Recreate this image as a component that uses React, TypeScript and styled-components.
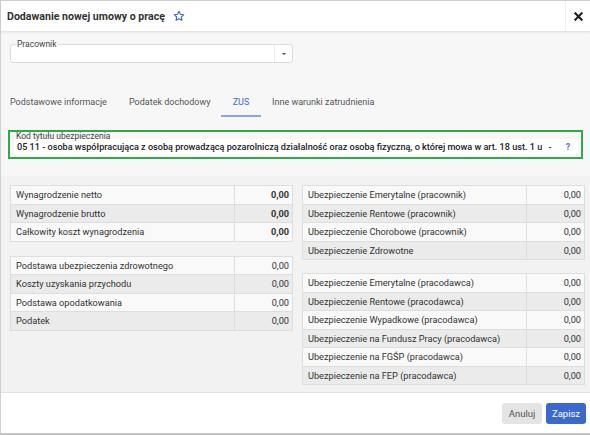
import styled, { createGlobalStyle } from 'styled-components';

const GlobalStyle = createGlobalStyle`
  html, body {
    margin: 0;
    padding: 0;
    background: #ffffff;
  }
  body {
    font-family: Roboto, "Liberation Sans", sans-serif;
    color: #333;
  }
`;

const Dialog = styled.div`
  width: 590px;
  height: 435px;
  box-sizing: border-box;
  border-top: 1px solid #d0d0d0;
  border-left: 1px solid #d0d0d0;
  border-bottom: 2px solid #c4c4c4;
  display: flex;
  flex-direction: column;
  background: #fff;
`;

const Header = styled.header`
  height: 30px;
  display: flex;
  align-items: stretch;
  background: #fff;
  border-bottom: 1px solid #e4e4e4;
  box-shadow: 0 1px 2px rgba(0, 0, 0, 0.06);
  position: relative;
  z-index: 1;
`;

const Title = styled.h1`
  flex: 1;
  margin: 0;
  padding-left: 6px;
  display: flex;
  align-items: center;
  gap: 8px;
  font-size: 10.6px;
  font-weight: bold;
  color: #333;
`;

const CloseButton = styled.div`
  width: 24px;
  border-left: 1px solid #f0f0f0;
  display: flex;
  align-items: center;
  justify-content: center;
`;

const Body = styled.div`
  flex: 1;
  display: flex;
  flex-direction: column;
  background: #f7f7f7;
`;

const Top = styled.div`
  padding: 12px 6px 0 9px;
`;

const Field = styled.div`
  position: relative;
  width: 283px;
  height: 19px;
  box-sizing: border-box;
  border: 1px solid #dcdcdc;
  border-radius: 3px;
  background: #fff;
  display: flex;
  justify-content: flex-end;
`;

const FloatLabel = styled.span`
  position: absolute;
  left: 5px;
  top: -6px;
  font-size: 8.5px;
  line-height: 10px;
  color: #444;
  background: linear-gradient(#f7f7f7 50%, #fff 50%);
  padding: 0 1px;
`;

const Caret = styled.div`
  width: 17px;
  border-left: 1px solid #ececec;
  display: flex;
  align-items: center;
  justify-content: center;
  &::after {
    content: '';
    border-left: 2.5px solid transparent;
    border-right: 2.5px solid transparent;
    border-top: 2.5px solid #444;
  }
`;

const Tabs = styled.nav`
  display: flex;
  margin-top: 26px;
  height: 28px;
`;

const Tab = styled.div<{ $active?: boolean; $w: number }>`
  width: ${(p) => p.$w}px;
  flex: none;
  box-sizing: border-box;
  font-size: 9px;
  color: ${(p) => (p.$active ? '#3f6cc6' : '#555')};
  text-align: ${(p) => (p.$active ? 'center' : 'left')};
  padding-top: 8px;
  border-bottom: 2px solid ${(p) => (p.$active ? '#8aa6dc' : 'transparent')};
`;

const Spacer = styled.div<{ $w: number }>`
  width: ${(p) => p.$w}px;
  flex: none;
`;

const InsuranceBox = styled.div`
  margin: 13px 1px 0 -2px;
  height: 29px;
  box-sizing: border-box;
  border: 2px solid #2faa48;
  padding: 0 3px 2px 4px;
  display: flex;
  flex-direction: column;
  justify-content: flex-end;
  position: relative;
`;

const SmallLabel = styled.span`
  position: absolute;
  left: 6px;
  top: 0px;
  font-size: 8.5px;
  line-height: 9px;
  color: #444;
`;

const InsuranceInput = styled.div`
  height: 16px;
  background: #fff;
  border-radius: 2px;
  display: flex;
  align-items: center;
  font-size: 9.1px;
  font-weight: 500;
  color: #222;
  padding-left: 3px;
`;

const InputText = styled.span`
  flex: 1;
  min-width: 0;
  white-space: nowrap;
  overflow: hidden;
  text-overflow: clip;
`;

const InputIcon = styled.span<{ $w: number; $color?: string }>`
  width: ${(p) => p.$w}px;
  flex: none;
  text-align: center;
  font-size: 9px;
  font-weight: bold;
  color: ${(p) => p.$color || '#444'};
`;

const Panel = styled.div`
  flex: 1;
  margin-top: 17px;
  background: #f2f2f2;
  padding: 9px 4px 0 9px;
  display: grid;
  grid-template-columns: 283px 283px;
  column-gap: 9px;
  align-items: start;
`;

const Column = styled.div<{ $gap: number }>`
  display: flex;
  flex-direction: column;
  gap: ${(p) => p.$gap}px;
`;

const Table = styled.div`
  border: 1px solid #dedede;
  border-bottom: none;
`;

const Row = styled.div<{ $alt: boolean }>`
  display: grid;
  grid-template-columns: 1fr 57px;
  height: 18.5px;
  box-sizing: border-box;
  border-bottom: 1px solid #dedede;
  background: ${(p) => (p.$alt ? '#ebebeb' : '#f9f9f9')};
  font-size: 9.2px;
  color: #333;
`;

const Label = styled.div`
  padding-left: 5px;
  display: flex;
  align-items: center;
  border-right: 1px solid #dedede;
  white-space: nowrap;
`;

const Value = styled.div<{ $bold?: boolean }>`
  padding-right: 3px;
  display: flex;
  align-items: center;
  justify-content: flex-end;
  font-weight: ${(p) => (p.$bold ? 'bold' : 'normal')};
`;

const Footer = styled.footer`
  height: 40px;
  border-top: 1px solid #e2e2e2;
  display: flex;
  justify-content: flex-end;
  align-items: center;
  gap: 4px;
  padding-right: 4px;
  background: #fff;
`;

const Button = styled.button<{ $primary?: boolean }>`
  width: 40px;
  height: 21px;
  border: none;
  border-radius: 3px;
  font-family: inherit;
  font-size: 9.5px;
  padding: 0;
  margin-top: 1px;
  background: ${(p) => (p.$primary ? '#3b68cf' : '#e4e4e4')};
  color: ${(p) => (p.$primary ? '#fff' : '#555')};
`;

type Item = [string, string];

const DataTable = ({ rows, bold }: { rows: Item[]; bold?: boolean }) => (
  <Table>
    {rows.map(([l, v], i) => (
      <Row key={l} $alt={i % 2 === 1}>
        <Label>{l}</Label>
        <Value $bold={bold}>{v}</Value>
      </Row>
    ))}
  </Table>
);

const salary: Item[] = [
  ['Wynagrodzenie netto', '0,00'],
  ['Wynagrodzenie brutto', '0,00'],
  ['Całkowity koszt wynagrodzenia', '0,00'],
];

const tax: Item[] = [
  ['Podstawa ubezpieczenia zdrowotnego', '0,00'],
  ['Koszty uzyskania przychodu', '0,00'],
  ['Podstawa opodatkowania', '0,00'],
  ['Podatek', '0,00'],
];

const employee: Item[] = [
  ['Ubezpieczenie Emerytalne (pracownik)', '0,00'],
  ['Ubezpieczenie Rentowe (pracownik)', '0,00'],
  ['Ubezpieczenie Chorobowe (pracownik)', '0,00'],
  ['Ubezpieczenie Zdrowotne', '0,00'],
];

const employer: Item[] = [
  ['Ubezpieczenie Emerytalne (pracodawca)', '0,00'],
  ['Ubezpieczenie Rentowe (pracodawca)', '0,00'],
  ['Ubezpieczenie Wypadkowe (pracodawca)', '0,00'],
  ['Ubezpieczenie na Fundusz Pracy (pracodawca)', '0,00'],
  ['Ubezpieczenie na FGŚP (pracodawca)', '0,00'],
  ['Ubezpieczenie na FEP (pracodawca)', '0,00'],
];

const Star = () => (
  <svg width="12" height="12" viewBox="0 0 24 24" fill="none" stroke="#3f63c9" strokeWidth="2.2" strokeLinejoin="round">
    <path d="M12 2.5l2.9 6.1 6.6.8-4.9 4.6 1.3 6.6L12 17.3l-5.9 3.3 1.3-6.6-4.9-4.6 6.6-.8z" />
  </svg>
);

const Cross = () => (
  <svg width="9" height="9" viewBox="0 0 10 10">
    <path d="M1.5 1.5l7 7M8.5 1.5l-7 7" stroke="#222" strokeWidth="2.4" strokeLinecap="square" />
  </svg>
);

export default function App() {
  return (
    <>
      <GlobalStyle />
      <Dialog>
        <Header>
          <Title>
            Dodawanie nowej umowy o pracę
            <Star />
          </Title>
          <CloseButton>
            <Cross />
          </CloseButton>
        </Header>
        <Body>
          <Top>
            <Field>
              <FloatLabel>Pracownik</FloatLabel>
              <Caret />
            </Field>
            <Tabs>
              <Tab $w={119}>Podstawowe informacje</Tab>
              <Tab $w={92}>Podatek dochodowy</Tab>
              <Tab $w={40} $active>ZUS</Tab>
              <Spacer $w={11} />
              <Tab $w={160}>Inne warunki zatrudnienia</Tab>
            </Tabs>
            <InsuranceBox>
              <SmallLabel>Kod tytułu ubezpieczenia</SmallLabel>
              <InsuranceInput>
                <InputText>
                  05 11 - osoba współpracująca z osobą prowadzącą pozarolniczą działalność oraz osobą fizyczną, o której mowa w art. 18 ust. 1 ustawy
                </InputText>
                <InputIcon $w={16}>-</InputIcon>
                <InputIcon $w={20} $color="#5b78b5">?</InputIcon>
              </InsuranceInput>
            </InsuranceBox>
          </Top>
          <Panel>
            <Column $gap={14}>
              <DataTable rows={salary} bold />
              <DataTable rows={tax} />
            </Column>
            <Column $gap={13}>
              <DataTable rows={employee} />
              <DataTable rows={employer} />
            </Column>
          </Panel>
        </Body>
        <Footer>
          <Button>Anuluj</Button>
          <Button $primary>Zapisz</Button>
        </Footer>
      </Dialog>
    </>
  );
}
